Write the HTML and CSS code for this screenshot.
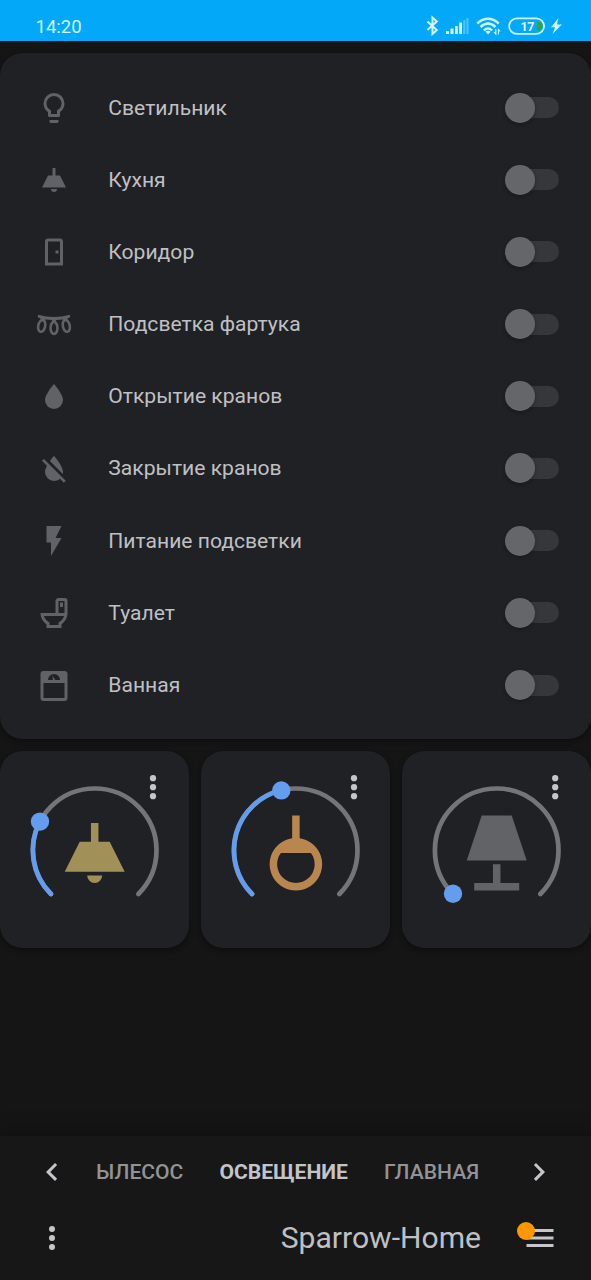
FILE: index.html
```
<!DOCTYPE html>
<html lang="ru">
<head>
<meta charset="utf-8">
<title>Sparrow-Home</title>
<link rel="stylesheet" href="styles.css">
</head>
<body>
<div class="app">
  <header class="status">
    <span class="clock">14:20</span>
    <svg class="status-icons" width="136" height="22" viewBox="0 0 136 22">
      <path d="M1.500 6.500L10.800 15L6.500 19V2.500L10.800 6.500L1.500 15" fill="none" stroke="#d2f6ff" stroke-width="2"/>
      <path d="M20 16h3v3h-3zM24.500 13.500h3V19h-3zM29 11h2.800v8H29z" fill="#d2f6ff"/>
      <path d="M33.200 7.500H36V19h-2.800z" fill="#d2f6ff"/>
      <path d="M37.200 5h2.200v14h-2.200zM40.500 3h2v16h-2z" fill="#4fc2fa"/>
      <g fill="none" stroke="#d2f6ff" stroke-width="2.400">
        <path d="M51.200 8.500Q62 -1 72.800 8.500M54.500 12Q62 5.200 69.500 12M57.900 15.300Q62 11.800 66.100 15.300"/>
      </g>
      <path d="M59.300 16.500Q62 14.800 64.700 16.500L62 19.500z" fill="#d2f6ff"/>
      <path d="M69.800 14v5l-1.800-2M72.400 19.500v-5l1.800 2" fill="none" stroke="#d2f6ff" stroke-width="1.100"/>
      <rect x="83.100" y="3.300" width="35" height="15.600" rx="7.800" fill="none" stroke="#d2f6ff" stroke-width="1.700"/>
      <path d="M111 6.500h1a4.600 4.600 0 0 1 0 9.200h-1z" fill="#35a82b"/>
      <text class="battery" x="94.500" y="15.500">17</text>
      <path d="M132.500 3L125 12.300h4.200L126.500 19L135.800 9.400h-4.900z" fill="#d2f6ff"/>
    </svg>
  </header>

  <main class="view">
    <section class="card entities">
      <div class="row"><svg class="icon" viewBox="0 0 24 24"><path d="M12,2A7,7 0 0,1 19,9C19,11.38 17.810,13.470 16,14.740V17A1,1 0 0,1 15,18H9A1,1 0 0,1 8,17V14.740C6.190,13.470 5,11.380 5,9A7,7 0 0,1 12,2M9,21V20H15V21A1,1 0 0,1 14,22H10A1,1 0 0,1 9,21M12,4A5,5 0 0,0 7,9C7,11.050 8.230,12.810 10,13.580V16H14V13.580C15.770,12.810 17,11.050 17,9A5,5 0 0,0 12,4Z"/></svg><span class="name">Светильник</span><span class="toggle"></span></div>
      <div class="row"><svg class="icon" viewBox="0 0 24 24"><path d="M8,9H11V4H13V9H16L20,17H4L8,9M14,18A2,2 0 0,1 12,20A2,2 0 0,1 10,18H14Z"/></svg><span class="name">Кухня</span><span class="toggle"></span></div>
      <div class="row"><svg class="icon" viewBox="0 0 24 24"><path d="M8,3C6.890,3 6,3.890 6,5V21H18V5C18,3.890 17.110,3 16,3H8M8,5H16V19H8V5M13,11V13H15V11H13Z"/></svg><span class="name">Коридор</span><span class="toggle"></span></div>
      <div class="row"><svg class="icon" viewBox="0 0 24 24"><path d="M1.500,5.200Q12,8.300 22.500,5.200L22.900,6.700L20.900,7.900V9.500H18V8.400L13.400,8.700V10.500H10.600V8.700L6,8.400V9.500H3.100V7.900L1.100,6.700Z"/><g class="bulbs"><ellipse cx="3.800" cy="12.600" rx="2.300" ry="4" transform="rotate(12 3.800 12.600)"/><ellipse cx="12" cy="14" rx="2.300" ry="4"/><ellipse cx="20.200" cy="12.600" rx="2.300" ry="4" transform="rotate(-12 20.200 12.600)"/></g></svg><span class="name">Подсветка фартука</span><span class="toggle"></span></div>
      <div class="row"><svg class="icon" viewBox="0 0 24 24"><path d="M12,20A6,6 0 0,1 6,14C6,10 12,3.250 12,3.250C12,3.250 18,10 18,14A6,6 0 0,1 12,20Z"/></svg><span class="name">Открытие кранов</span><span class="toggle"></span></div>
      <div class="row"><svg class="icon" viewBox="0 0 24 24"><path d="M17.120,17.120L12.500,12.500L5.270,5.270L4,6.550L7.320,9.870C6.550,11.320 6,12.790 6,14A6,6 0 0,0 12,20C13.520,20 14.900,19.430 15.960,18.500L18.590,21.130L19.860,19.860L17.120,17.120M18,14C18,10 12,3.200 12,3.200C12,3.200 10.670,4.710 9.270,6.720L17.860,15.310C17.950,14.890 18,14.450 18,14Z"/></svg><span class="name">Закрытие кранов</span><span class="toggle"></span></div>
      <div class="row"><svg class="icon" viewBox="0 0 24 24"><path d="M7,2V13H10V22L17,10H13L17,2H7Z"/></svg><span class="name">Питание подсветки</span><span class="toggle"></span></div>
      <div class="row"><svg class="icon" viewBox="0 0 24 24"><path fill-rule="evenodd" d="M9,22H17V19.500C19.410,17.870 21,15.120 21,12V4A2,2 0 0,0 19,2H15C13.890,2 13,2.900 13,4V12H3C3,15.090 4.570,17.830 7,19.460V22H9M5.290,14H18.710C18.140,15.910 16.770,17.530 15,18.330V20H9V18.330C7.230,17.530 5.860,15.910 5.290,14M15,4H19V12H15V4M16,5V8H18V5H16Z"/></svg><span class="name">Туалет</span><span class="toggle"></span></div>
      <div class="row"><svg class="icon" viewBox="0 0 24 24"><path d="M5,2H19A2,2 0 0,1 21,4V20A2,2 0 0,1 19,22H5A2,2 0 0,1 3,20V4A2,2 0 0,1 5,2M12,4A4,4 0 0,0 8,8H11.260L10.850,5.230L12.900,8H16A4,4 0 0,0 12,4M5,10V20H19V10H5Z"/></svg><span class="name">Ванная</span><span class="toggle"></span></div>
    </section>

    <section class="lights">
      <article class="card light">
        <svg class="dial" viewBox="0 0 189 197">
          <path class="track" d="M51 143A61.800 61.800 0 1 1 138.400 143"/>
          <path class="level" d="M51 143A61.800 61.800 0 0 1 40 70.600"/>
          <circle class="handle" cx="40" cy="70.600" r="9.200"/>
          <g class="lamp dim-yellow" transform="translate(49.700 57) scale(3.750)"><path d="M8,9H11V4H13V9H16L20,17H4L8,9M14,18A2,2 0 0,1 12,20A2,2 0 0,1 10,18H14Z"/></g>
          <g class="more"><circle cx="153" cy="27.200" r="3.100"/><circle cx="153" cy="36.200" r="3.100"/><circle cx="153" cy="45.200" r="3.100"/></g>
        </svg>
      </article>
      <article class="card light">
        <svg class="dial" viewBox="0 0 189 197">
          <path class="track" d="M51 143A61.800 61.800 0 1 1 138.400 143"/>
          <path class="level" d="M51 143A61.800 61.800 0 0 1 80.300 39.300"/>
          <circle class="handle" cx="80.300" cy="39.400" r="9.200"/>
          <g class="lamp copper" transform="translate(49.900 57) scale(3.750)"><path fill-rule="evenodd" d="M11,2H13V8.070A7,7 0 1,1 11,8.070ZM8,12A5,5 0 1,0 16,12Z"/></g>
          <g class="more"><circle cx="153" cy="27.200" r="3.100"/><circle cx="153" cy="36.200" r="3.100"/><circle cx="153" cy="45.200" r="3.100"/></g>
        </svg>
      </article>
      <article class="card light">
        <svg class="dial" viewBox="0 0 189 197">
          <path class="track" d="M51 143A61.800 61.800 0 1 1 138.400 143"/>
          <circle class="handle" cx="51" cy="142.800" r="9.200"/>
          <g class="lamp off" transform="translate(49.700 57) scale(3.750)"><path d="M8,2H16L20,14H4L8,2M11,15H13V20H18V22H6V20H11V15Z"/></g>
          <g class="more"><circle cx="153.200" cy="27.200" r="3.100"/><circle cx="153.200" cy="36.200" r="3.100"/><circle cx="153.200" cy="45.200" r="3.100"/></g>
        </svg>
      </article>
    </section>
  </main>

  <footer class="bottom">
    <nav class="tabs">
      <svg class="nav-icon" viewBox="0 0 24 24"><path d="M15.410,16.580L10.830,12L15.410,7.410L14,6L8,12L14,18L15.410,16.580Z"/></svg>
      <div class="tab-strip">
        <span class="tab">ЫЛЕСОС</span>
        <span class="tab active">ОСВЕЩЕНИЕ</span>
        <span class="tab">ГЛАВНАЯ</span>
      </div>
      <svg class="nav-icon" viewBox="0 0 24 24"><path d="M8.590,16.580L13.170,12L8.590,7.410L10,6L16,12L10,18L8.590,16.580Z"/></svg>
    </nav>
    <div class="toolbar">
      <svg class="nav-icon" viewBox="0 0 24 24"><path d="M12,16A2,2 0 0,1 14,18A2,2 0 0,1 12,20A2,2 0 0,1 10,18A2,2 0 0,1 12,16M12,10A2,2 0 0,1 14,12A2,2 0 0,1 12,14A2,2 0 0,1 10,12A2,2 0 0,1 12,10M12,4A2,2 0 0,1 14,6A2,2 0 0,1 12,8A2,2 0 0,1 10,6A2,2 0 0,1 12,4Z"/></svg>
      <span class="title">Sparrow-Home</span>
      <span class="menu">
        <svg class="nav-icon" viewBox="0 0 24 24"><path d="M3,6H21V8H3V6M3,11H21V13H3V11M3,16H21V18H3V16Z"/></svg>
        <span class="badge"></span>
      </span>
    </div>
  </footer>
</div>
</body>
</html>
```
FILE: styles.css
```
* { box-sizing: border-box; }

body {
  margin: 0;
  background: #151515;
  color: #bfc0c4;
  font-family: Roboto, "Liberation Sans", sans-serif;
}

svg { display: block; flex: none; }

.app {
  display: flex;
  flex-direction: column;
  height: 1280px;
  overflow: hidden;
}

.status {
  display: flex;
  justify-content: space-between;
  height: 41px;
  padding: 15px 29px 0 35.500px;
  background: #03a9f8;
}

.clock {
  color: #d2f6ff;
  font-size: 18.500px;
  line-height: 25px;
}

.battery {
  fill: #e4faff;
  font-size: 12.500px;
  font-weight: 700;
  letter-spacing: -0.500px;
}

.view {
  flex: 1;
  display: flex;
  flex-direction: column;
  gap: 12px;
  padding-top: 12px;
}

.card {
  background: #202125;
  border-radius: 22.500px;
  box-shadow: 0 3px 4px rgba(0, 0, 0, 0.2), 0 1px 7px rgba(0, 0, 0, 0.2);
}

.entities {
  display: flex;
  flex-direction: column;
  gap: 12.200px;
  height: 686px;
  padding: 24px 31.600px 0 36.300px;
}

.row {
  display: flex;
  align-items: center;
  flex: none;
  height: 60px;
}

.icon {
  width: 36px;
  height: 36px;
  margin-top: 2px;
  fill: #5f6266;
}

.bulbs { fill: none; stroke: #5f6266; stroke-width: 1.700; }

.name {
  flex: 1;
  margin-left: 36px;
  padding-top: 1px;
  font-size: 21.100px;
  line-height: 30px;
}

.toggle {
  width: 54px;
  height: 21px;
  margin-top: 1px;
  border-radius: 10.500px;
  background: #363739;
  display: flex;
  align-items: center;
}

.toggle::before {
  content: "";
  width: 30px;
  height: 30px;
  flex: none;
  border-radius: 50%;
  background: #656669;
  box-shadow: 0 2px 4px rgba(0, 0, 0, 0.25);
}

.lights {
  display: grid;
  grid-template-columns: repeat(3, 1fr);
  gap: 12px;
}

.light { height: 197px; }

.dial { width: 100%; height: 100%; }

.track, .level {
  fill: none;
  stroke-width: 4.700;
  stroke-linecap: round;
}

.track { stroke: #747578; }
.level { stroke: #649cee; }
.handle { fill: #649cee; }
.more { fill: #c5c6ca; }
.dim-yellow { fill: #a29059; }
.copper { fill: #ba8650; }
.off { fill: #616367; }

.bottom {
  height: 144px;
  background: #171717;
  box-shadow: 0 0 22px rgba(0, 0, 0, 0.4);
}

.tabs {
  display: flex;
  align-items: center;
  height: 72px;
  padding: 0 34.500px 0 34px;
}

.tab-strip {
  flex: 1;
  display: flex;
  gap: 36px;
  margin-left: 26px;
  font-size: 21.100px;
  font-weight: 500;
  line-height: 30px;
}

.tab { color: #929396; }
.tab.active { color: #c3c4c8; font-weight: 700; }

.nav-icon {
  width: 36px;
  height: 36px;
  fill: #c5c6ca;
}

.toolbar {
  display: flex;
  align-items: center;
  height: 60px;
  padding: 0 33px 0 33.500px;
}

.title {
  flex: 1;
  margin-right: 41px;
  text-align: right;
  font-size: 30.100px;
  line-height: 40px;
}

.menu { position: relative; }

.badge {
  position: absolute;
  left: -5px;
  top: 2px;
  width: 18px;
  height: 18px;
  border-radius: 50%;
  background: #ff9800;
}
```
